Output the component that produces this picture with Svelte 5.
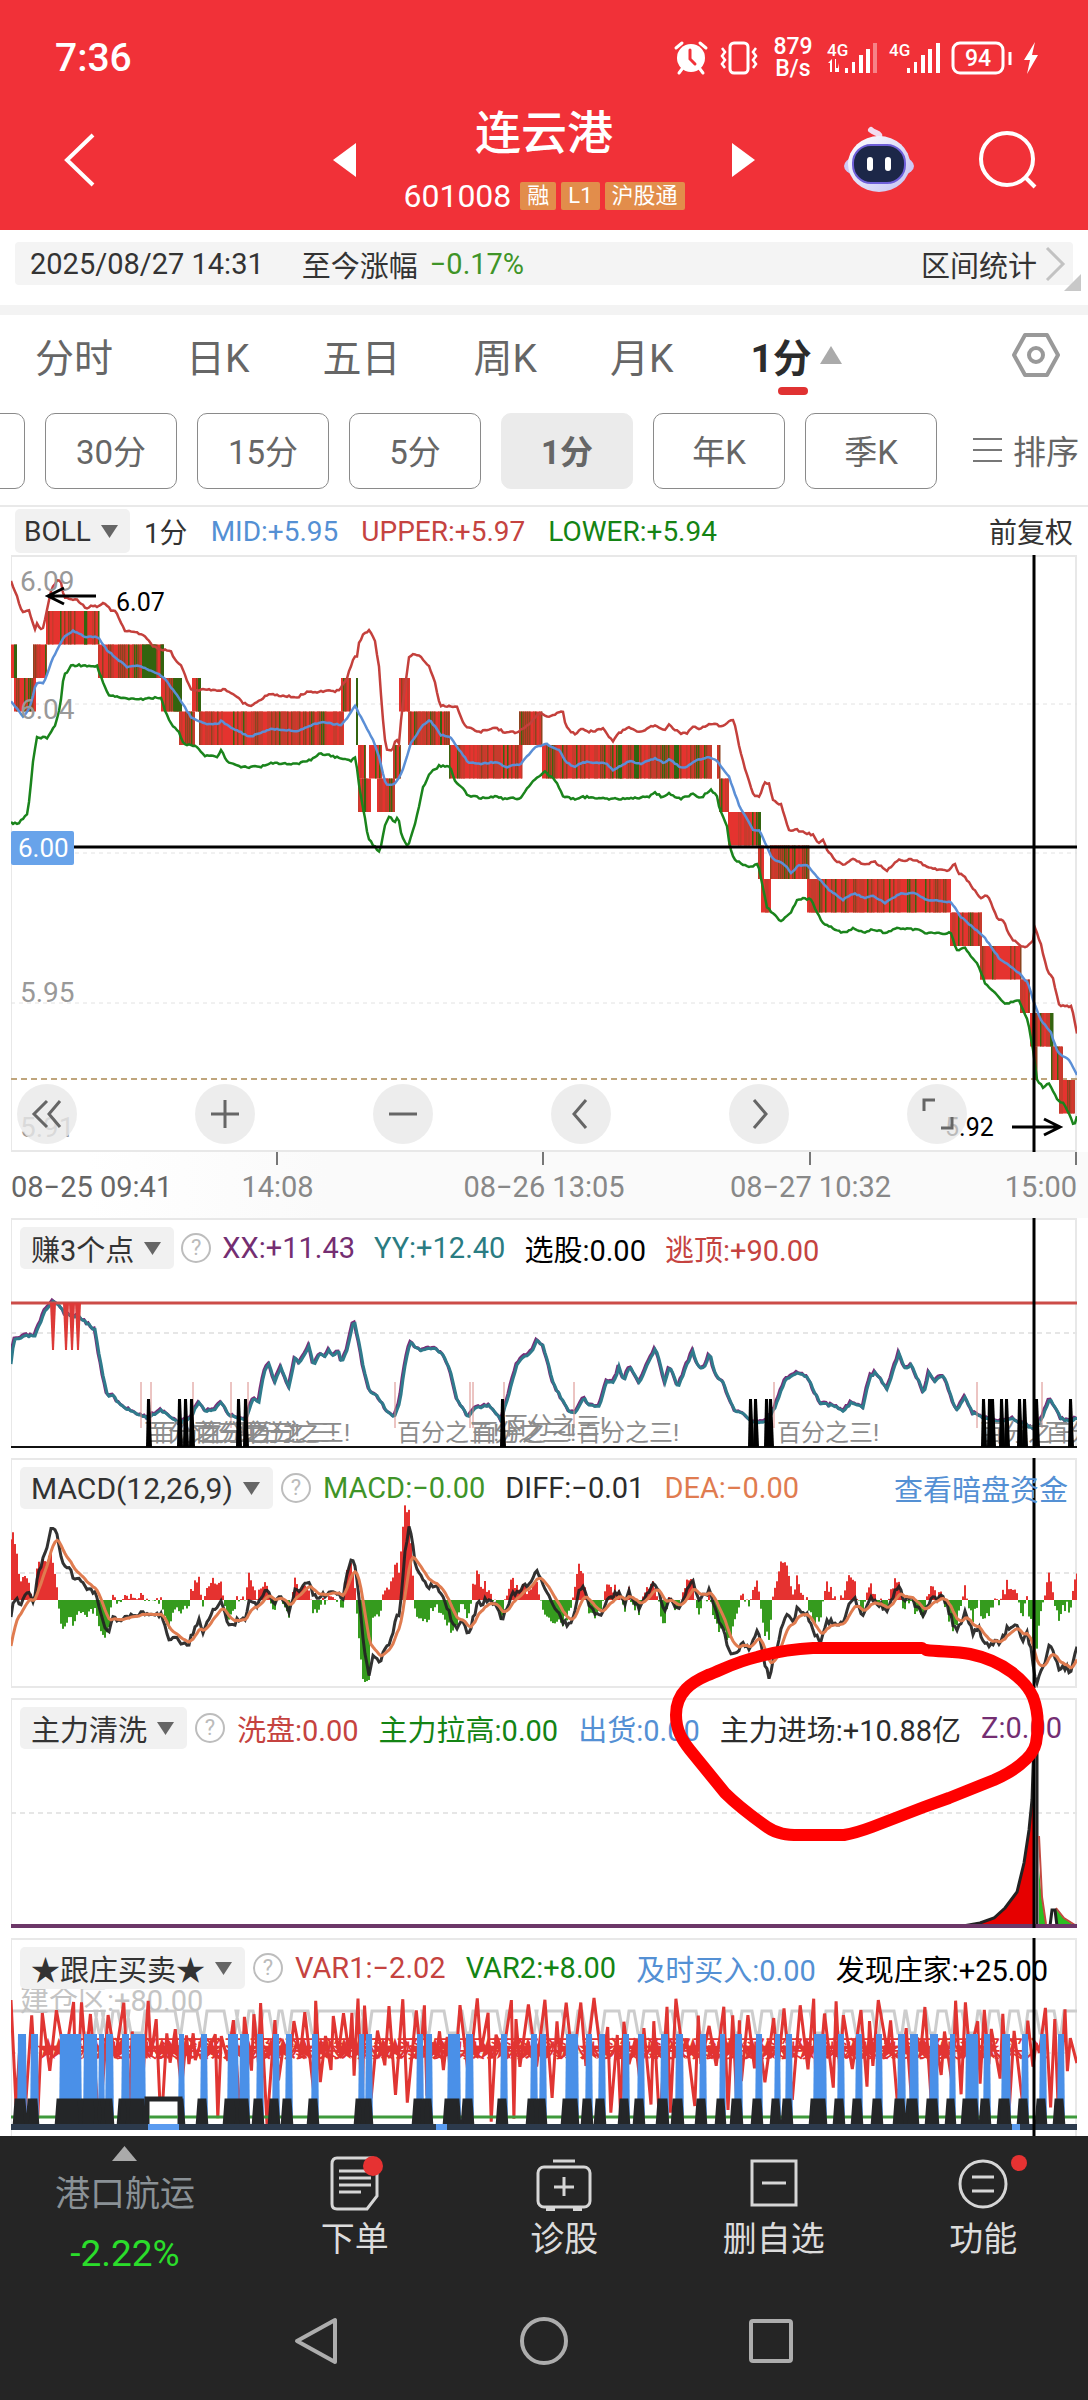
<script>
  function noise(seed) {
    let s = seed;
    return () => {
      s = (s * 16807) % 2147483647;
      return s / 2147483647;
    };
  }

  function parse(text) {
    return text.trim().split(/\s+/).map((p) => p.split(',').map(Number));
  }

  function path(points) {
    return 'M' + points.map(([x, y]) => `${Math.round(x * 10) / 10} ${Math.round(y * 10) / 10}`).join('L');
  }

  function sample(points, x) {
    let i = 1;
    while (i < points.length - 1 && points[i][0] < x) i++;
    const [x0, y0] = points[i - 1];
    const [x1, y1] = points[i];
    return y0 + ((y1 - y0) * (x - x0)) / (x1 - x0 || 1);
  }

  function rough(points, amount, seed, step = 3) {
    const rnd = noise(seed);
    const out = [];
    for (let x = points[0][0]; x <= points[points.length - 1][0]; x += step) {
      out.push([x, sample(points, x) + (rnd() - 0.5) * 2 * amount]);
    }
    return out;
  }

  /* price bands */
  const upper = parse(`11,582 16,593 22,613 29,610 35,630 37,624 40,629 44,628 46,613 52,588 57,580 61,582 64,598 77,600 86,608 94,605 98,607 104,603 111,610 116,612 120,620 125,631 137,632 146,637 152,645 161,650 170,650 175,660 182,667 191,690 225,690 234,694 243,703 251,706 257,703 268,694 298,697 307,692 339,691 347,678 354,657 357,656 359,643 364,633 370,630 375,642 379,667 382,710 386,750 392,751 396,740 399,743 402,710 409,658 414,653 421,657 430,668 435,683 440,706 457,707 464,725 479,732 495,728 507,733 518,732 529,725 539,713 546,717 563,711 566,727 574,734 584,728 587,732 603,729 613,741 619,733 629,727 640,732 655,725 664,730 669,725 680,733 687,733 694,726 699,729 710,724 723,726 729,721 734,721 740,750 746,772 754,797 760,796 764,783 769,783 773,800 781,805 789,830 797,830 813,835 818,843 824,840 827,850 835,860 843,865 853,859 865,865 874,861 886,871 898,860 917,860 928,868 949,871 954,863 959,873 965,877 980,898 988,895 997,918 1004,922 1010,937 1019,945 1027,947 1033,940 1035,928 1041,945 1048,973 1053,978 1059,1005 1072,1007 1077,1033`);
  const middle = parse(`11,702 16,707 23,717 30,707 36,683 44,683 52,660 64,637 73,631 86,637 98,637 107,650 127,667 137,665 157,673 164,678 179,698 191,717 205,724 218,724 221,721 232,728 250,737 270,729 298,731 320,722 341,725 348,717 355,706 364,723 373,740 379,757 386,785 395,784 402,772 411,743 423,725 430,720 441,735 450,737 468,762 480,764 495,762 507,767 521,764 534,748 546,744 559,750 566,762 574,767 584,762 606,763 613,770 629,761 641,764 655,758 664,763 669,759 680,767 687,767 694,761 710,757 718,762 729,777 739,805 753,830 760,831 772,858 785,865 791,873 799,865 807,865 819,879 829,890 843,900 854,893 864,898 873,896 885,903 899,894 916,893 926,900 951,902 961,917 985,938 999,958 1019,973 1028,983 1034,1003 1041,1020 1051,1033 1058,1053 1069,1060 1077,1075`);
  const lower = parse(`11,823 18,823 27,815 30,797 32,767 37,737 48,738 55,725 60,707 64,673 68,673 70,665 97,666 102,680 108,695 121,698 146,699 161,697 164,708 170,722 179,733 183,743 198,747 204,756 218,757 221,750 227,762 241,767 261,767 270,763 298,764 312,759 319,753 339,758 350,761 356,757 358,780 364,813 368,837 373,845 380,852 385,825 389,816 395,823 398,816 402,837 408,847 416,820 423,788 430,773 439,766 450,767 455,780 468,795 480,798 495,797 507,799 521,798 532,782 545,772 555,780 563,796 574,799 584,797 613,799 648,797 655,793 662,797 669,793 680,799 694,794 701,798 711,789 717,797 720,810 727,827 730,847 734,860 750,867 758,864 761,878 767,907 781,922 791,912 798,899 811,899 822,923 843,933 854,928 864,933 873,929 885,933 899,928 920,930 926,933 951,933 956,950 965,948 978,965 985,983 1005,1004 1019,1000 1024,1013 1028,1020 1033,1050 1037,1080 1043,1087 1049,1083 1058,1100 1065,1105 1074,1126 1077,1117`);

  /* candle runs: start, end, price level */
  const runs = [
    [9, 17, 1], [14, 36, 2], [33, 47, 1], [46, 99, 0], [98, 164, 1], [161, 182, 2], [179, 194, 3], [192, 201, 2],
    [199, 344, 3], [341, 351, 2], [358, 366, 4], [369, 382, 4], [358, 371, 5], [377, 395, 5], [393, 401, 4],
    [399, 410, 2], [408, 450, 3], [449, 522, 4], [519, 542, 3], [542, 712, 4], [717, 720, 4], [719, 729, 5],
    [728, 760, 6], [758, 764, 7], [770, 809, 7], [761, 771, 8], [807, 951, 8], [950, 982, 9], [980, 1021, 10],
    [1020, 1030, 11], [1030, 1053, 12], [1034, 1037, 13], [1051, 1062, 13], [1059, 1074, 14]
  ];
  const greens = [[14, 17, 1], [84, 87, 0], [142, 156, 1], [174, 182, 2], [198, 201, 2], [356, 358, 2], [356, 358, 3], [618, 622, 4], [634, 639, 4], [674, 679, 4], [440, 442, 3], [364, 366, 5], [161, 164, 1], [758, 761, 6], [1051, 1053, 12]];
  const levelTop = (n) => 611 + n * 33.5;
  const stripes = (() => {
    const rnd = noise(77);
    const out = [];
    for (const [a, b, n] of runs) {
      out.push({ x: a, w: b - a, y: levelTop(n), fill: '#e5332f' });
      for (let x = a; x < b; x += 2) {
        const r = rnd();
        const fill = r < 0.36 ? null : r < 0.62 ? '#c73b2d' : r < 0.88 ? '#8d4420' : '#3b650f';
        if (fill) out.push({ x, w: r > 0.5 ? 1.5 : 2, y: levelTop(n), fill });
      }
    }
    for (const [a, b, n] of greens) out.push({ x: a, w: b - a, y: levelTop(n), fill: '#33640f' });
    return out;
  })();

  /* first indicator */
  const swing = parse(`11,1365 14,1340 27,1336 35,1336 45,1312 54,1301 59,1305 66,1315 80,1317 95,1330 102,1370 108,1397 114,1395 118,1403 127,1409 148,1418 161,1410 179,1424 191,1417 199,1402 205,1411 214,1410 221,1402 229,1415 246,1420 253,1399 259,1403 264,1372 269,1363 275,1382 281,1368 289,1387 295,1358 300,1363 309,1346 314,1366 320,1352 324,1357 329,1350 334,1357 338,1350 342,1363 348,1347 354,1319 359,1343 364,1370 370,1393 377,1395 386,1410 394,1417 400,1403 404,1370 410,1343 421,1350 434,1348 443,1355 451,1373 457,1400 468,1417 475,1408 489,1405 501,1420 511,1387 518,1362 532,1352 537,1341 543,1345 554,1385 568,1410 574,1414 584,1398 589,1405 600,1406 606,1382 614,1383 619,1367 624,1380 630,1367 640,1383 648,1363 656,1348 665,1382 670,1366 678,1388 687,1365 693,1352 698,1367 704,1368 710,1353 715,1373 723,1383 734,1410 744,1413 751,1422 764,1423 774,1410 786,1379 799,1373 808,1378 820,1403 837,1407 843,1412 851,1403 863,1407 870,1377 876,1372 887,1390 899,1354 906,1370 911,1364 924,1393 929,1373 935,1381 944,1375 956,1411 965,1398 973,1413 984,1418 998,1423 1010,1418 1033,1428 1040,1423 1050,1399 1061,1418 1071,1422 1077,1418`);
  const blackSpikes = [149, 180, 186, 192, 239, 246, 503, 751, 756, 767, 771, 984, 990, 993, 1002, 1007, 1020, 1025, 1037, 1071];
  const redSpikes = [53, 66, 72, 78];
  const hairlines = [141, 151, 193, 231, 248, 395, 470, 473, 504, 574, 774, 977, 1042];
  const notes = [[144, 1441], [152, 1441], [194, 1441], [198, 1441], [234, 1441], [248, 1441], [397, 1441], [470, 1441], [474, 1441], [504, 1434], [577, 1441], [777, 1441], [980, 1441], [1045, 1441]];

  /* MACD: signal line and histogram follow from the difference line */
  const diffPoints = parse(`11,1620 14,1598 20,1603 29,1593 34,1603 38,1573 46,1553 51,1527 54,1532 56,1530 62,1560 70,1570 75,1580 80,1577 89,1590 96,1592 102,1617 108,1633 112,1617 118,1622 141,1612 154,1615 161,1615 170,1640 179,1639 181,1643 189,1642 199,1620 203,1632 211,1613 221,1603 229,1625 246,1617 250,1598 256,1607 268,1588 275,1605 280,1595 289,1612 295,1592 309,1583 314,1597 338,1592 342,1603 348,1568 354,1556 359,1597 364,1650 369,1678 373,1658 380,1660 392,1638 396,1617 400,1613 405,1550 409,1527 412,1540 416,1567 429,1587 436,1583 446,1605 456,1630 461,1622 469,1634 477,1605 491,1598 502,1618 514,1593 532,1582 536,1567 543,1582 554,1607 566,1625 573,1620 578,1593 584,1587 589,1605 599,1617 606,1602 619,1592 624,1605 629,1593 640,1608 648,1592 656,1583 665,1612 669,1597 678,1612 687,1590 693,1583 699,1600 710,1590 718,1617 725,1637 732,1657 743,1643 750,1650 758,1630 764,1660 769,1677 778,1643 786,1613 792,1623 797,1610 807,1613 814,1632 821,1641 827,1622 844,1622 849,1603 855,1600 862,1617 872,1597 887,1612 898,1585 904,1600 911,1598 924,1616 930,1600 944,1597 956,1632 965,1613 973,1633 979,1627 984,1645 1001,1642 1008,1627 1019,1628 1022,1642 1027,1632 1031,1650 1036,1685 1045,1663 1050,1641 1059,1667 1066,1667 1070,1673 1077,1647`);
  const diff = rough(diffPoints, 3, 9, 2);
  let level = 1655;
  const dea = diff.map(([x, y]) => {
    level += (y - level) * 0.24;
    return [x, level];
  });
  const histogram = diff.map(([x, y], i) => {
    const h = Math.max(-82, Math.min(96, (dea[i][1] - y) * 2.1));
    return { x: x - 1, y: h > 0 ? 1600 - h : 1600, h: Math.abs(h), up: h > 0 };
  });

  /* trading signal panel */
  const pulses = [[18, 26], [31, 38], [60, 81], [84, 97], [99, 104], [106, 113], [122, 129], [131, 145], [179, 184], [201, 207], [228, 238], [240, 249], [257, 263], [273, 279], [286, 292], [312, 318], [359, 364], [366, 372], [417, 423], [426, 432], [448, 460], [466, 473], [501, 507], [531, 537], [540, 546], [566, 578], [586, 592], [599, 605], [623, 629], [638, 644], [661, 668], [676, 683], [700, 706], [720, 725], [735, 742], [756, 762], [775, 780], [786, 792], [814, 826], [838, 844], [856, 862], [876, 882], [898, 905], [910, 918], [930, 938], [950, 955], [966, 978], [984, 990], [1002, 1010], [1022, 1028], [1040, 1046], [1058, 1064]];
  const grey = (() => {
    let d = 'M11 2011';
    for (const [a, b] of pulses.filter((_, i) => i > 2)) d += `L${a - 4} 2011L${a} 2033L${b - 3} 2033L${b} 2011`;
    return d + 'L1077 2011';
  })();
  const black = (() => {
    let d = 'M11 2127';
    for (const [a, b] of pulses) d += `L${a - 4} 2127L${a - 2} 2100L${b - 2} 2100L${b} 2127`;
    return d + 'L1077 2127';
  })();
  const burst = (() => {
    const rnd = noise(4242);
    let d = 'M11 2000L16 2105';
    let high = true;
    for (let x = 20; x < 1077; x += 2 + rnd() * 7) {
      const big = rnd() > 0.4;
      const y = high ? (big ? 1996 + rnd() * 26 : 2025 + rnd() * 20) : big ? 2070 + rnd() * 60 : 2050 + rnd() * 20;
      d += `L${x.toFixed(1)} ${y.toFixed(1)}`;
      high = !high;
    }
    return d;
  })();
  const buys = (() => {
    const rnd = noise(31);
    const out = [];
    for (let x = 36; x < 990; x += 11 + rnd() * 15) out.push(Math.round(x));
    return out;
  })();

  const tabs = ['分时', '日K', '五日', '周K', '月K'];
  const chips = ['30分', '15分', '5分', '1分', '年K', '季K'];
  const tools = [
    { name: '收起', d: 'M13 -13L2 0L13 13M0 -13L-13 0L0 13' },
    { name: '放大', d: 'M-14 0H14M0 -14V14' },
    { name: '缩小', d: 'M-14 0H14' },
    { name: '左移', d: 'M5 -14L-7 0L5 14' },
    { name: '右移', d: 'M-5 -14L7 0L-5 14' },
    { name: '全屏', d: 'M-13 -3V-14H-2M15 3V14H4' }
  ];
  const panels = [
    { id: 'gain', name: '赚3个点', top: 1218, items: [['XX:+11.43', 'purple'], ['YY:+12.40', 'teal'], ['选股:0.00', 'black'], ['逃顶:+90.00', 'red']] },
    { id: 'macd', name: 'MACD(12,26,9)', top: 1458, items: [['MACD:−0.00', 'green'], ['DIFF:−0.01', 'ink'], ['DEA:−0.00', 'orange']], link: '查看暗盘资金' },
    { id: 'wash', name: '主力清洗', top: 1698, items: [['洗盘:0.00', 'red'], ['主力拉高:0.00', 'deep'], ['出货:0.00', 'blue'], ['主力进场:+10.88亿', 'ink'], ['Z:0.00', 'purple']] },
    { id: 'follow', name: '★跟庄买卖★', top: 1938, items: [['VAR1:−2.02', 'red'], ['VAR2:+8.00', 'deep'], ['及时买入:0.00', 'blue'], ['发现庄家:+25.00', 'black']] }
  ];
</script>

<div class="screen">
  <header>
    <div class="status">
      <span class="clock">7:36</span>
      <div class="indicators">
        <svg width="36" height="36" viewBox="0 0 36 36" fill="none" stroke="#fff" stroke-width="3" stroke-linecap="round">
          <circle cx="18" cy="18" r="14" fill="#fff" stroke="none" /><path d="M3 8L9 3M33 8L27 3M9 29L6 33M27 29L30 33" />
          <path d="M17 10V19L22 24" stroke="#f13138" />
        </svg>
        <svg width="40" height="36" viewBox="0 0 40 36" fill="none" stroke="#fff" stroke-width="3">
          <rect x="11" y="3" width="18" height="30" rx="4" /><path d="M3 8L6 12L3 16L6 20L3 24L6 28M37 8L34 12L37 16L34 20L37 24L34 28" stroke-width="2.5" />
        </svg>
        <span class="speed"><span>879</span><span>B/s</span></span>
        <svg width="52" height="36" viewBox="0 0 52 36" fill="#fff">
          <text x="0" y="16" font-size="17" font-weight="500">4G</text>
          <path d="M3 32V23H1L5 19V32ZM9 19V28H11L12 23V32H8V19Z" />
          <path d="M18 28h3v5h-3zM25 22h3v11h-3zM32 15h4v18h-4zM39 9h4v24h-4z" /><path d="M46 3h4v30h-4z" opacity=".4" />
        </svg>
        <svg width="52" height="36" viewBox="0 0 52 36" fill="#fff">
          <text x="0" y="16" font-size="17" font-weight="500">4G</text>
          <path d="M18 28h3v5h-3zM25 22h3v11h-3zM32 15h4v18h-4zM39 9h4v24h-4zM47 3h4v30h-4z" />
        </svg>
        <svg class="battery" width="62" height="36" viewBox="0 0 62 36" fill="none" stroke="#fff" stroke-width="3">
          <rect x="2" y="3" width="50" height="30" rx="7" /><path d="M59 12V25" />
          <text x="27" y="26" font-size="23" font-weight="500" fill="#fff" stroke="none" text-anchor="middle">94</text>
        </svg>
        <svg width="16" height="36" viewBox="0 0 16 36" fill="#fff"><path d="M12 2L1 20H7L4 34L15 15H9Z" /></svg>
      </div>
    </div>
    <div class="titlebar">
      <button class="plain back" aria-label="返回">
        <svg width="32" height="54" viewBox="0 0 32 54" fill="none" stroke="#fff" stroke-width="4"><path d="M29 2L3 27L29 52" /></svg>
      </button>
      <div class="stock">
        <button class="plain" aria-label="上一只"><svg width="23" height="34" viewBox="0 0 23 34"><path d="M23 0V34L0 17Z" fill="#fff" /></svg></button>
        <div class="names">
          <h1>连云港</h1>
          <div class="code"><span>601008</span><i>融</i><i>L1</i><i>沪股通</i></div>
        </div>
        <button class="plain" aria-label="下一只"><svg width="23" height="34" viewBox="0 0 23 34"><path d="M0 0V34L23 17Z" fill="#fff" /></svg></button>
      </div>
      <div class="actions">
        <button class="plain" aria-label="智能助手">
          <svg width="70" height="68" viewBox="0 0 70 68">
            <defs><linearGradient id="shell" x1="0" y1="0" x2="1" y2="1"><stop offset="0" stop-color="#fff" /><stop offset="1" stop-color="#c3c2f2" /></linearGradient></defs>
            <path d="M35 12C37 6 31 8 27 4" fill="none" stroke="#f2dcf0" stroke-width="6" stroke-linecap="round" />
            <ellipse cx="35" cy="40" rx="35" ry="14" fill="#cfc8f5" />
            <ellipse cx="35" cy="38" rx="31" ry="28" fill="url(#shell)" />
            <rect x="9" y="19" width="52" height="38" rx="18" fill="#1c2748" stroke="#6e5fd8" stroke-width="2" />
            <rect x="23" y="31" width="6" height="14" rx="3" fill="#fff" /><rect x="41" y="31" width="6" height="14" rx="3" fill="#fff" />
          </svg>
        </button>
        <button class="plain" aria-label="搜索">
          <svg width="58" height="58" viewBox="0 0 58 58" fill="none" stroke="#fff" stroke-width="4"><circle cx="28" cy="28" r="26" /><path d="M46 46L56 56" /></svg>
        </button>
      </div>
    </div>
  </header>

  <section class="range">
    <div class="rangebar">
      <span>2025/08/27 14:31</span>
      <span class="since">至今涨幅</span>
      <span class="fall">−0.17%</span>
      <a href="#stats">区间统计<svg width="20" height="36" viewBox="0 0 20 36" fill="none" stroke="#c2c2c2" stroke-width="3"><path d="M2 2L18 18L2 34" /></svg></a>
    </div>
    <svg class="corner" width="17" height="17" viewBox="0 0 17 17"><path d="M17 0V17H0Z" fill="#c8c8c8" /></svg>
  </section>

  <nav class="tabs">
    {#each tabs as tab}<button class="plain">{tab}</button>{/each}
    <button class="plain current"><b>1分</b><svg width="22" height="18" viewBox="0 0 22 18"><path d="M11 0L22 18H0Z" fill="#aaa" /></svg></button>
    <button class="plain gear" aria-label="设置">
      <svg width="48" height="46" viewBox="0 0 48 46" fill="none" stroke="#999" stroke-width="4" stroke-linejoin="round"><path d="M13 3H35L46 23L35 43H13L2 23Z" /><circle cx="24" cy="23" r="7" /></svg>
    </button>
  </nav>

  <div class="chips">
    <button aria-label="60分"></button>
    {#each chips as chip}<button class:on={chip === '1分'}>{chip}</button>{/each}
    <button class="plain sort"><svg width="30" height="26" viewBox="0 0 30 26" stroke="#777" stroke-width="2"><path d="M0 2H29M0 13H29M0 24H29" /></svg>排序</button>
  </div>

  <div class="boll">
    <button class="pill">BOLL<svg width="17" height="13" viewBox="0 0 17 13"><path d="M0 0H17L8.5 13Z" fill="#666" /></svg></button>
    <span>1分</span>
    <span class="blue">MID:+5.95</span>
    <span class="red">UPPER:+5.97</span>
    <span class="deep">LOWER:+5.94</span>
    <span class="adjust">前复权</span>
  </div>

  <section class="panel main">
    <svg class="plot" viewBox="11 555 1066 597" fill="none">
      <rect x="11" y="556" width="1065" height="595" stroke="#e8e8e8" stroke-width="2" />
      <path d="M11 704H1077M11 853H1077M11 1003H1077" stroke="#e2e2e2" stroke-width="1" stroke-dasharray="4 4" />
      <path d="M11 1079H1077" stroke="#bfa57c" stroke-width="2" stroke-dasharray="6 4" />
      {#each stripes as s}<rect x={s.x} y={s.y} width={s.w} height="33.5" fill={s.fill} />{/each}
      <path d={path(rough(upper, 1, 5, 2))} stroke="#c4403c" stroke-width="2.5" />
      <path d={path(rough(lower, 1, 15, 2))} stroke="#1a841c" stroke-width="2.5" />
      <path d={path(rough(middle, 0.6, 25, 2))} stroke="#5b8fd6" stroke-width="2.5" />
      <g class="scale"><text x="20" y="591">6.09</text><text x="20" y="719">6.04</text><text x="20" y="1002">5.95</text><text x="20" y="1137">5.91</text></g>
      <g class="mark"><text x="116" y="611">6.07</text><text x="945" y="1136">5.92</text></g>
      <path d="M96 596H48M64 588L48 596L64 604M1012 1127H1060M1044 1119L1060 1127L1044 1135" stroke="#000" stroke-width="3" />
      <path d="M74 847H1077M1034 555V1152" stroke="#000" stroke-width="3" />
      <rect x="11" y="831" width="63" height="34" rx="2" fill="#68a3ea" />
      <text class="cursor" x="18" y="857">6.00</text>
    </svg>
    <div class="tools">
      {#each tools as t}
        <button aria-label={t.name}><svg width="60" height="60" viewBox="-30 -30 60 60" fill="none" stroke="#666" stroke-width="3"><path d={t.d} /></svg></button>
      {/each}
    </div>
  </section>

  <div class="axis">
    <svg viewBox="0 0 1088 14" stroke="#777" stroke-width="2"><path d="M277 0V13M543 0V13M810 0V13M1076 0V13" /></svg>
    <div class="times"><span>08−25 09:41</span><span>14:08</span><span>08−26 13:05</span><span>08−27 10:32</span><span>15:00</span></div>
  </div>

  <div class="stack">
    {#each panels as p}
      <section class="panel" class:last={p.id === 'follow'}>
        <svg class="plot" viewBox="11 {p.top} 1066 {p.id === 'follow' ? 198 : 230}" fill="none">
          <rect x="11" y={p.top + 1} width="1065" height="228" stroke="#e8e8e8" stroke-width="2" />
          <path d="M11 {p.top + 115}H1077" stroke="#e6e6e6" stroke-width="2" stroke-dasharray="5 4" />
          {#if p.id === 'gain'}
            <path d={path(rough(swing, 1.5, 3, 2).map(([x, y]) => [x - 1, y - 1]))} stroke="#7a2e78" stroke-width="3" />
            <path d={path(rough(swing, 1, 3, 2))} stroke="#2f7b8c" stroke-width="3" />
            <path d="M11 1303H1077" stroke="#cc4c48" stroke-width="3" />
            {#each redSpikes as x}<path d="M{x - 3} 1303H{x + 3}L{x + 1} 1350H{x - 1}Z" fill="#dd3a38" />{/each}
            {#each hairlines as x}<path d="M{x} 1382V1428" stroke="#d98a86" stroke-width="1" />{/each}
            <g class="notes">{#each notes as [x, y]}<text {x} {y}>百分之三!</text>{/each}</g>
            <path d="M11 1447H1077" stroke="#111" stroke-width="2" />
            {#each blackSpikes as x}<path d="M{x - 3} 1447L{x - 2} 1399H{x + 1}L{x + 3} 1447Z" fill="#000" />{/each}
          {:else if p.id === 'macd'}
            {#each histogram as b}<rect x={b.x} y={b.y} width="2" height={b.h} fill={b.up ? '#e53230' : '#359b1e'} />{/each}
            <path d={path(diff)} stroke="#222" stroke-opacity=".93" stroke-width="3" />
            <path d={path(dea)} stroke="#e07c50" stroke-width="3" />
          {:else if p.id === 'wash'}
            <path d="M963 1926L980 1923L994 1918L1005 1908L1017 1892L1024 1863L1029 1830L1032 1800L1034 1750V1927Z" fill="#e60000" />
            <path d="M963 1926L980 1923L994 1918L1005 1908L1017 1892L1024 1863L1029 1830L1032 1800L1034 1740H1037V1927" stroke="#222" stroke-width="3" />
            <path d="M1039 1870L1042 1900L1046 1926H1039ZM1056 1909L1064 1918L1075 1926H1056Z" fill="#2bbf20" />
            <path d="M1039 1836L1042 1897L1046 1924M1056 1908L1064 1918L1075 1925" stroke="#c44a40" stroke-width="2" />
            <path d="M1050 1926L1052 1910H1055L1057 1926" stroke="#222" stroke-width="3" />
            <path d="M11 1926H1077" stroke="#6c3768" stroke-width="4" />
          {:else}
            <path d={grey} stroke="#cdcdcd" stroke-width="3" />
            <text class="zone" x="20" y="2011">建仓区:+80.00</text>
            <path d={burst} stroke="#e03532" stroke-width="3" />
            <g class="buys">{#each buys as x}<text {x} y="2057">★买入</text>{/each}</g>
            {#each pulses as [a, b]}<path d="M{a - 1} 2127L{a} 2034H{b}L{b + 1} 2127Z" fill="#4a90e8" />{/each}
            <path d="M11 2117H1077" stroke="#3f9a3c" stroke-width="3" />
            <path d={black} stroke="#242628" stroke-width="3" fill="#242628" />
            <path d="M147 2127V2099H180V2127" stroke="#242628" stroke-width="5" fill="#fff" />
            <path d="M149 2117H178" stroke="#3f9a3c" stroke-width="3" />
            <path d="M11 2127H1077" stroke="#2c3a4c" stroke-width="6" />
            <path d="M148 2127H179M436 2127H447M1012 2127H1020" stroke="#5a9bf0" stroke-width="6" />
          {/if}
          <path d="M1034 {p.top}V{p.top + 230}" stroke="#000" stroke-width="3" />
        </svg>
        <div class="legend {p.id}">
          <button class="pill">{p.name}<svg width="17" height="13" viewBox="0 0 17 13"><path d="M0 0H17L8.5 13Z" fill="#666" /></svg></button>
          <button class="help" aria-label="说明">?</button>
          {#each p.items as [label, tone]}<span class={tone}>{label}</span>{/each}
          {#if p.link}<a class="blue" href="#funds">{p.link}</a>{/if}
        </div>
      </section>
    {/each}
    <svg class="scribble" viewBox="0 1218 1088 918" fill="none" stroke="#f00" stroke-width="12" stroke-linejoin="round" stroke-linecap="round">
      <path d="M922 1648H813C790 1649 775 1652 757 1657C735 1662 722 1670 708 1675C692 1682 676 1692 676 1715C676 1730 682 1740 690 1750L725 1793C738 1806 750 1815 767 1827C777 1834 787 1835 799 1835H844C856 1833 864 1830 872 1827L924 1807L949 1798L994 1780C1010 1773 1033 1759 1036 1743C1039 1726 1038 1710 1033 1697C1026 1681 1004 1661 970 1654C955 1651 940 1652 926 1650" />
    </svg>
  </div>

  <footer>
    <div class="menu">
      <button class="plain sector">
        <svg width="25" height="15" viewBox="0 0 25 15"><path d="M12.5 0L25 15H0Z" fill="#aaa" /></svg>
        <span>港口航运</span><strong>-2.22%</strong>
      </button>
      <button class="plain">
        <svg width="60" height="60" viewBox="0 0 60 60" fill="none" stroke="#d6d6d6" stroke-width="3">
          <path d="M12 6H46Q52 6 52 12V44L42 57H12Q7 57 7 52V12Q7 6 12 6ZM14 19H44M14 26H46M14 33H46M14 40H36" /><circle cx="48" cy="14" r="10" fill="#e63232" stroke="none" />
        </svg>下单
      </button>
      <button class="plain">
        <svg width="60" height="60" viewBox="0 0 60 60" fill="none" stroke="#d6d6d6" stroke-width="3">
          <rect x="4" y="15" width="52" height="40" rx="6" /><path d="M19 9H41M30 25V44M20 35H40" /><path d="M12 57H21M39 57H48" stroke-width="4" />
        </svg>诊股
      </button>
      <button class="plain">
        <svg width="60" height="60" viewBox="0 0 60 60" fill="none" stroke="#d6d6d6" stroke-width="3"><rect x="8" y="9" width="44" height="44" /><path d="M18 31H42" /></svg>删自选
      </button>
      <button class="plain">
        <svg width="76" height="60" viewBox="0 0 76 60" fill="none" stroke="#d6d6d6" stroke-width="3"><circle cx="38" cy="32" r="23" /><path d="M27 25H49M27 39H49" /><circle cx="74" cy="11" r="8" fill="#e63232" stroke="none" /></svg>功能
      </button>
    </div>
    <div class="system">
      <button class="plain" aria-label="后退"><svg width="50" height="50" viewBox="0 0 50 50" fill="none" stroke="#adadad" stroke-width="4" stroke-linejoin="round"><path d="M43 4V46L5 25Z" /></svg></button>
      <button class="plain" aria-label="主页"><svg width="50" height="50" viewBox="0 0 50 50" fill="none" stroke="#adadad" stroke-width="4"><circle cx="25" cy="25" r="22" /></svg></button>
      <button class="plain" aria-label="最近任务"><svg width="50" height="50" viewBox="0 0 50 50" fill="none" stroke="#adadad" stroke-width="4"><rect x="5" y="5" width="40" height="40" rx="2" /></svg></button>
    </div>
  </footer>
</div>

<style>
  :global(body) { margin: 0; background: #fff; }
  .screen { font-family: Roboto, "Noto Sans CJK SC", sans-serif; font-size: 29px; color: #333; background: #fff; overflow: hidden; }
  svg { display: block; flex: none; overflow: visible; }
  button { font: inherit; color: inherit; margin: 0; cursor: pointer; }
  .plain { border: 0; padding: 0; background: none; }
  a { color: inherit; text-decoration: none; }

  header { background: #f13138; color: #fff; padding-bottom: 10px; }
  .status { display: flex; justify-content: space-between; align-items: center; height: 84px; padding: 16px 49px 0 55px; }
  .clock { font-size: 39px; font-weight: 500; }
  .indicators { display: flex; align-items: center; gap: 10px; }
  .speed { display: flex; flex-direction: column; align-items: center; width: 48px; font-size: 23px; line-height: 22px; font-weight: 500; }
  .titlebar { display: grid; grid-template-columns: 1fr 422px 1fr; align-items: center; height: 120px; }
  .back { justify-self: start; padding-left: 64px; }
  .stock { display: flex; justify-content: space-between; align-items: center; }
  .names { display: flex; flex-direction: column; align-items: center; gap: 11px; }
  h1 { margin: 0; font-size: 46px; line-height: 60px; font-weight: 500; }
  .code { display: flex; align-items: center; gap: 5px; height: 44px; font-size: 32px; }
  .code span { padding-right: 4px; }
  .code i { font-style: normal; font-size: 22px; line-height: 28px; padding: 0 7px; border-radius: 2px; background: #e28d4b; }
  .actions { display: flex; justify-content: flex-end; align-items: center; gap: 65px; padding-right: 51px; }

  .range { position: relative; padding: 12px 15px 20px; border-bottom: 10px solid #f3f3f3; }
  .rangebar { display: flex; align-items: center; height: 43px; padding: 0 8px 0 15px; background: #f4f4f4; border-radius: 4px; }
  .since { margin: 0 12px 0 38px; }
  .fall { color: #3f9428; }
  .rangebar a { display: flex; align-items: center; gap: 8px; margin-left: auto; }
  .corner { position: absolute; right: 7px; top: 44px; }

  .tabs { display: flex; align-items: center; gap: 73px; height: 80px; padding: 0 28px 0 35px; font-size: 39px; color: #666; }
  .current { position: relative; display: flex; align-items: center; gap: 8px; margin-left: 4px; color: #2c2c2c; }
  .current::after { content: ""; position: absolute; left: 28px; bottom: -12px; width: 30px; height: 8px; border-radius: 4px; background: #e03232; }
  .gear { margin-left: auto; }

  .chips { display: flex; gap: 20px; margin-left: -107px; padding: 18px 0 16px; border-bottom: 2px solid #e9e9e9; color: #666; font-size: 33px; }
  .chips button { flex: none; box-sizing: border-box; width: 132px; height: 76px; border: 1px solid #8a8a8a; border-radius: 10px; padding: 0 0 2px; background: #fff; }
  .chips .on { background: #ebebeb; border-color: #ebebeb; font-weight: 700; }
  .chips .sort { display: flex; align-items: center; gap: 10px; width: auto; margin-left: 16px; border: 0; }

  .pill { display: flex; align-items: center; gap: 10px; height: 42px; padding: 0 13px 0 11px; border: 0; border-radius: 5px; background: #f1f1f1; color: #333; white-space: nowrap; }
  .boll { display: flex; align-items: center; gap: 23px; height: 48px; padding: 0 15px; font-size: 28px; white-space: nowrap; }
  .boll .pill { height: 44px; padding: 0 12px 0 9px; margin-right: -9px; }
  .boll .adjust { margin-left: auto; }

  .blue { color: #5490d4; }
  .red { color: #c54340; }
  .deep { color: #148414; }
  .green { color: #3f9428; }
  .purple { color: #742e72; }
  .teal { color: #2a7c82; }
  .orange { color: #e07c50; }
  .ink { color: #2c2c2c; }
  .black { color: #000; }

  .panel { display: grid; margin: 0 11px 10px; }
  .panel > * { grid-area: 1 / 1; min-width: 0; }
  .plot { width: 100%; height: auto; overflow: hidden; }
  .main { margin-bottom: 0; }
  .last { margin-bottom: 0; }
  .scale { fill: #999; font-size: 28px; }
  .mark { fill: #000; font-size: 25px; }
  .cursor { fill: #fff; font-size: 26px; }
  .notes { fill: #8c8c8c; font-size: 24px; }
  .zone { fill: #c4c4c4; font-size: 29px; }
  .buys { fill: #e23432; font-size: 24px; }

  .tools { display: flex; align-self: end; justify-content: space-between; margin: 0 110px 8px 6px; }
  .tools button { width: 60px; height: 60px; border: 0; border-radius: 50%; padding: 0; background: rgba(232, 232, 232, 0.8); }

  .axis { background: linear-gradient(90deg, #fff 8%, #fafafa 30%); color: #888; }
  .axis svg { width: 100%; height: auto; }
  .times { display: grid; grid-template-columns: 1fr 2fr 2fr 2fr 1fr; height: 52px; line-height: 42px; padding: 0 11px; font-size: 29px; text-align: center; white-space: nowrap; }
  .times span { min-width: 0; }
  .times span:first-child { color: #666; text-align: left; }
  .times span:last-child { text-align: right; }

  .stack { position: relative; }
  .legend { display: flex; align-self: start; align-items: center; gap: 20px; padding: 9px 9px 0 9px; white-space: nowrap; }
  .legend .pill { margin-right: -12px; }
  .legend.gain { gap: 19px; }
  .legend.macd .pill { font-size: 30px; }
  .help { flex: none; box-sizing: border-box; width: 30px; height: 30px; margin-right: -8px; padding: 0; border: 2px solid #bdbdbd; border-radius: 50%; background: none; color: #bbb; font-size: 22px; line-height: 26px; }
  .legend a { margin-left: auto; }
  .scribble { position: absolute; left: 0; top: 0; width: 100%; height: auto; pointer-events: none; }

  footer { background: #252525; color: #dcdcdc; }
  .menu { display: grid; grid-template-columns: 250px repeat(4, 1fr); height: 144px; font-size: 34px; }
  .menu button { display: flex; flex-direction: column; align-items: center; justify-self: center; padding-top: 16px; line-height: 50px; gap: 2px; }
  .menu .sector { padding-top: 10px; gap: 9px; font-size: 35px; color: #8a9196; }
  .sector strong { font-size: 37px; font-weight: 400; color: #2bdd2b; }
  .system { display: flex; justify-content: center; gap: 177px; padding: 36px 0 34px; }
</style>
